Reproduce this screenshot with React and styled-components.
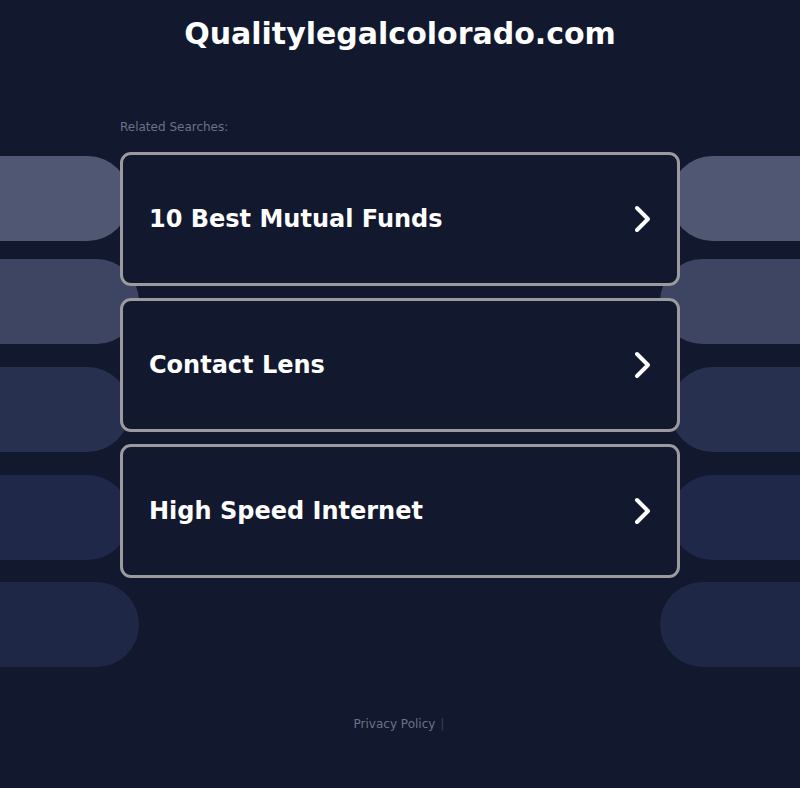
import React from 'react'
import styled, { createGlobalStyle } from 'styled-components'

const GlobalStyle = createGlobalStyle`
  html, body {
    margin: 0;
    padding: 0;
    background: #12182e;
  }
  body {
    font-family: "DejaVu Sans", "Liberation Sans", sans-serif;
  }
`

const searches = ['10 Best Mutual Funds', 'Contact Lens', 'High Speed Internet']

const pills = [
  { color: '#4f5773', left: 130, right: 130, gap: 0 },
  { color: '#3d4562', left: 139, right: 140, gap: 18 },
  { color: '#283050', left: 130, right: 130, gap: 23 },
  { color: '#1f2848', left: 130, right: 130, gap: 23 },
  { color: '#1e2746', left: 139, right: 140, gap: 22 },
]

function Chevron() {
  return (
    <svg width="20" height="30" viewBox="0 0 20 30">
      <polyline
        points="4,4 15,15 4,26"
        fill="none"
        stroke="#ffffff"
        strokeWidth="4"
        strokeLinecap="round"
        strokeLinejoin="round"
      />
    </svg>
  )
}

export default function App() {
  return (
    <Page>
      <GlobalStyle />
      <Decor>
        {pills.map((p, i) => (
          <PillRow key={i} gap={p.gap}>
            <Pill color={p.color} w={p.left} side="left" />
            <Pill color={p.color} w={p.right} side="right" />
          </PillRow>
        ))}
      </Decor>
      <Content>
        <Title>Qualitylegalcolorado.com</Title>
        <Main>
          <Label>Related Searches:</Label>
          <CardList>
            {searches.map((s) => (
              <Card key={s}>
                <CardText>{s}</CardText>
                <Chevron />
              </Card>
            ))}
          </CardList>
        </Main>
        <Footer>
          <FooterLink>Privacy Policy</FooterLink>
          <Divider>|</Divider>
        </Footer>
      </Content>
    </Page>
  )
}

const Page = styled.div`
  position: relative;
  min-height: 788px;
  overflow: hidden;
  background: #12182e;
`

const Decor = styled.div`
  position: absolute;
  top: 0;
  left: 0;
  right: 0;
  padding-top: 156px;
  display: flex;
  flex-direction: column;
  z-index: 0;
`

const PillRow = styled.div`
  display: flex;
  justify-content: space-between;
  height: 85px;
  margin-top: ${(p) => p.gap}px;
`

const Pill = styled.div`
  width: ${(p) => p.w}px;
  height: 85px;
  background: ${(p) => p.color};
  border-radius: ${(p) => (p.side === 'left' ? '0 43px 43px 0' : '43px 0 0 43px')};
`

const Content = styled.div`
  position: relative;
  z-index: 1;
  display: flex;
  flex-direction: column;
  align-items: center;
`

const Title = styled.h1`
  margin: 16px 0 0;
  height: 36px;
  line-height: 36px;
  font-size: 30px;
  font-weight: bold;
  color: #ffffff;
  text-align: center;
`

const Main = styled.div`
  width: 560px;
  margin-top: 67px;
`

const Label = styled.div`
  font-size: 12px;
  line-height: 16px;
  color: #6b7289;
  margin-bottom: 17px;
`

const CardList = styled.div`
  display: flex;
  flex-direction: column;
  gap: 12px;
`

const Card = styled.div`
  box-sizing: border-box;
  height: 134px;
  border: 3px solid #9b9b9f;
  border-radius: 11px;
  background: #12182e;
  display: flex;
  align-items: center;
  justify-content: space-between;
  padding: 0 24px 0 26px;
`

const CardText = styled.span`
  font-size: 24px;
  font-weight: bold;
  color: #ffffff;
`

const Footer = styled.div`
  margin-top: 138px;
  display: flex;
  gap: 5px;
  font-size: 12px;
  line-height: 16px;
  margin-left: -2px;
`

const FooterLink = styled.span`
  color: #6b7289;
`

const Divider = styled.span`
  color: #3b425a;
`
